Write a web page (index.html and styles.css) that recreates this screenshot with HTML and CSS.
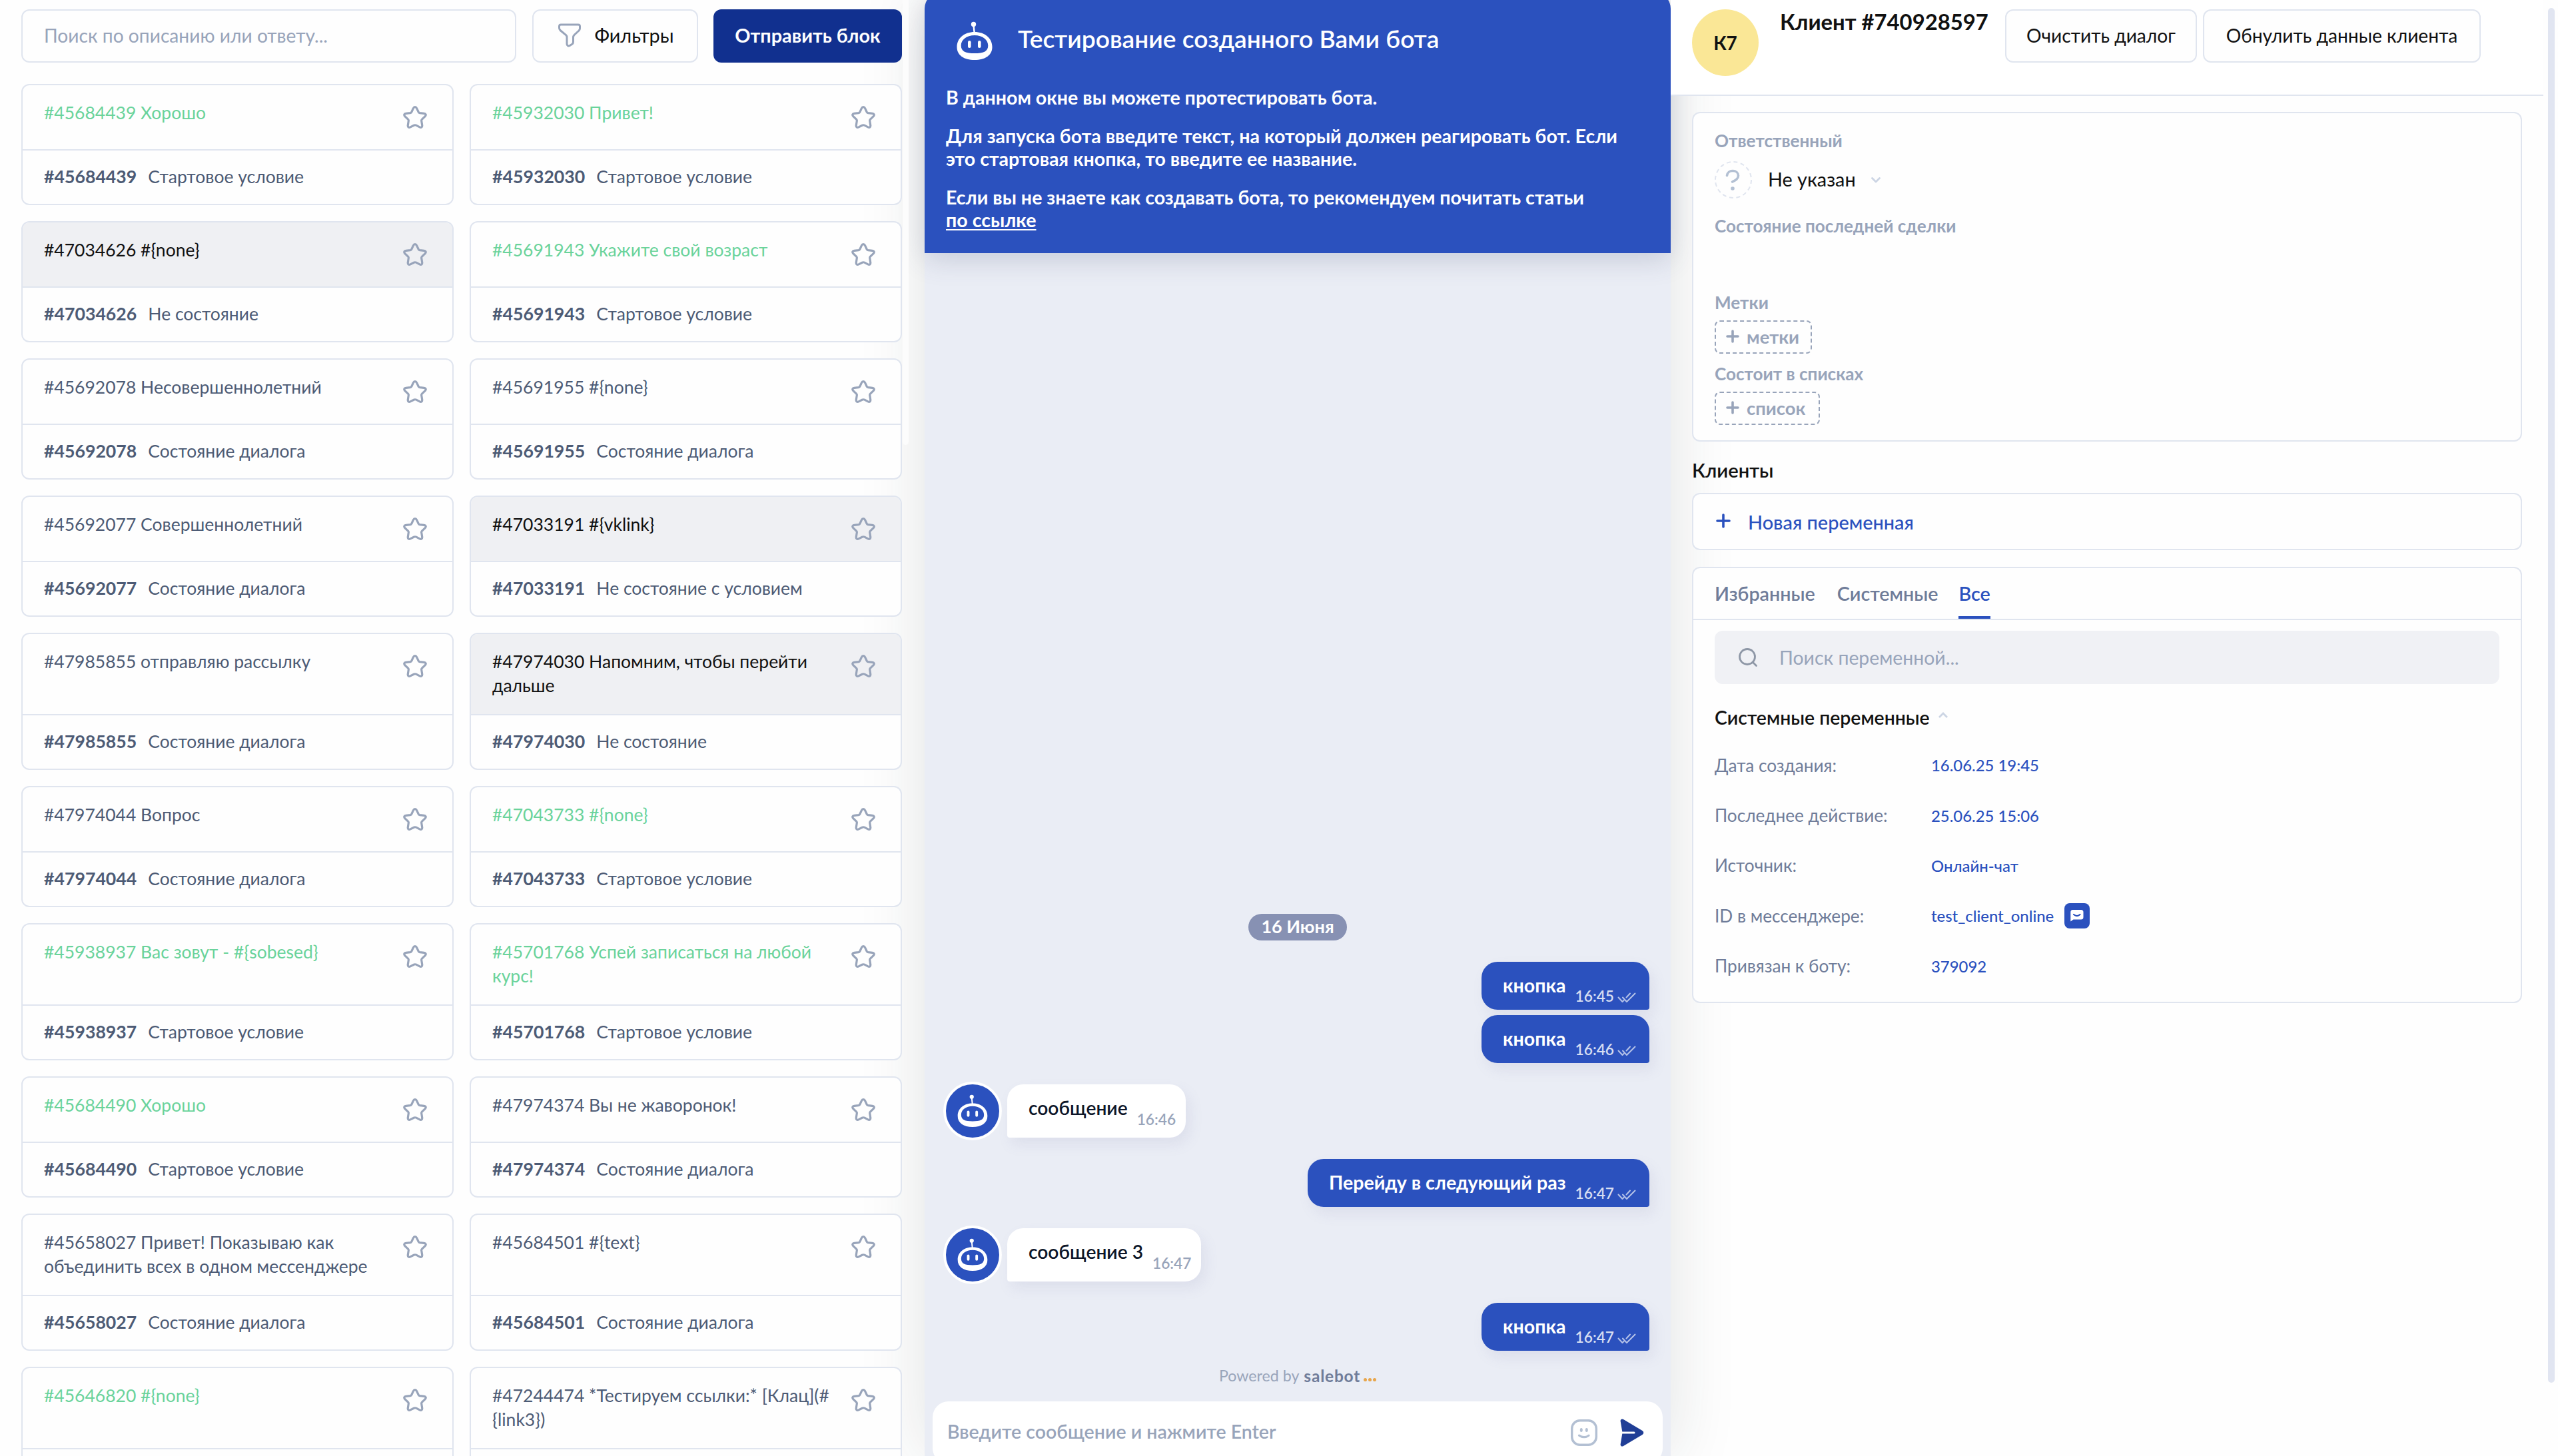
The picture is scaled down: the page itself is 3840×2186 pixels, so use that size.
FILE: index.html
```html
<!DOCTYPE html>
<html lang="ru">
<head>
<meta charset="utf-8">
<title>Тестирование бота</title>
<link rel="stylesheet" href="styles.css">
</head>
<body>
<svg class="sprite" aria-hidden="true">
  <symbol id="star" viewBox="0 0 36 34"><path d="M18 1.6c1.2 0 2 .7 2.6 2l2.5 5.4c.5 1 1 1.4 2.100 1.600l6.300.8c2.800.4 3.600 2.200 1.700 4.200l-4.700 4.500c-.7.700-1 1.400-.8 2.300l1 6.600c.4 2.800-1.300 4-3.700 2.900l-5.200-2.700c-1.200-.6-2.400-.6-3.600 0L11 31.900c-2.400 1.100-4.100-.1-3.700-2.900l1-6.600c.2-.9-.1-1.600-.8-2.300l-4.700-4.500c-1.900-2-1.100-3.800 1.700-4.200l6.300-.8c1.100-.2 1.600-.6 2.100-1.600l2.500-5.400c.6-1.300 1.400-2 2.600-2z" fill="none" stroke="#98a4ba" stroke-width="3.200" stroke-linejoin="round"/></symbol>
  <symbol id="bot" viewBox="0 0 54 58">
    <circle cx="25.500" cy="4.500" r="3.700" fill="#fff"/>
    <path d="M25.500 6l1.400 13" stroke="#fff" stroke-width="2.400"/>
    <path fill="#fff" fill-rule="evenodd" d="M27 17c15 0 26.500 9 26.500 22.500C53.500 52 43 59 27 59S.5 52 .5 39.500C.5 26 12 17 27 17zm0 5c-12 0-20.300 6.500-20.300 15.500S14 49 27 49s20.300-2.500 20.300-11.500S39 22 27 22z" transform="translate(0 -1)"/>
    <rect x="17" y="29" width="4.600" height="11" rx="2.300" fill="#fff"/>
    <rect x="32" y="29" width="4.600" height="11" rx="2.300" fill="#fff"/>
  </symbol>
  <symbol id="checks" viewBox="0 0 28 16"><path d="M1.500 7.500l6 6.500L9.500 12M8 7.500l6 6.500L26.500 1.500M13.500 7.500L19 1.500" fill="none" stroke="#fff" stroke-opacity=".65" stroke-width="2" stroke-linecap="round" stroke-linejoin="round"/></symbol>
</svg>

<div class="app">
  <section class="blocks">
    <div class="toolbar">
      <div class="search">Поиск по описанию или ответу...</div>
      <div class="btn filters"><svg width="34" height="36" viewBox="0 0 34 36"><path d="M4 2h26q2.500 0 2.500 2.500v3c0 1.500-.5 2.500-1.500 3.500l-7 6.500c-1 1-1.500 2-1.500 3.500v7c0 1.500-.5 2.500-1.700 3.300l-3.500 2.200c-2 1.200-4.300 0-4.300-2.500V21c0-1.300-.5-2.500-1.400-3.400L3 10.500C2 9.500 1.500 8.500 1.500 7V4.500Q1.500 2 4 2z" fill="none" stroke="#98a4ba" stroke-width="3" stroke-linejoin="round"/></svg><span>Фильтры</span></div>
      <div class="btn primary">Отправить блок</div>
    </div>
    <div class="cards">
      <article class="card green"><header><p>#45684439 Хорошо</p><svg class="star"><use href="#star"/></svg></header><footer><b>#45684439</b>Стартовое условие</footer></article>
      <article class="card green"><header><p>#45932030 Привет!</p><svg class="star"><use href="#star"/></svg></header><footer><b>#45932030</b>Стартовое условие</footer></article>
      <article class="card grey"><header><p>#47034626 #{none}</p><svg class="star"><use href="#star"/></svg></header><footer><b>#47034626</b>Не состояние</footer></article>
      <article class="card green"><header><p>#45691943 Укажите свой возраст</p><svg class="star"><use href="#star"/></svg></header><footer><b>#45691943</b>Стартовое условие</footer></article>
      <article class="card"><header><p>#45692078 Несовершеннолетний</p><svg class="star"><use href="#star"/></svg></header><footer><b>#45692078</b>Состояние диалога</footer></article>
      <article class="card"><header><p>#45691955 #{none}</p><svg class="star"><use href="#star"/></svg></header><footer><b>#45691955</b>Состояние диалога</footer></article>
      <article class="card"><header><p>#45692077 Совершеннолетний</p><svg class="star"><use href="#star"/></svg></header><footer><b>#45692077</b>Состояние диалога</footer></article>
      <article class="card grey"><header><p>#47033191 #{vklink}</p><svg class="star"><use href="#star"/></svg></header><footer><b>#47033191</b>Не состояние с условием</footer></article>
      <article class="card"><header><p>#47985855 отправляю рассылку</p><svg class="star"><use href="#star"/></svg></header><footer><b>#47985855</b>Состояние диалога</footer></article>
      <article class="card grey"><header><p>#47974030 Напомним, чтобы перейти<br>дальше</p><svg class="star"><use href="#star"/></svg></header><footer><b>#47974030</b>Не состояние</footer></article>
      <article class="card"><header><p>#47974044 Вопрос</p><svg class="star"><use href="#star"/></svg></header><footer><b>#47974044</b>Состояние диалога</footer></article>
      <article class="card green"><header><p>#47043733 #{none}</p><svg class="star"><use href="#star"/></svg></header><footer><b>#47043733</b>Стартовое условие</footer></article>
      <article class="card green"><header><p>#45938937 Вас зовут - #{sobesed}</p><svg class="star"><use href="#star"/></svg></header><footer><b>#45938937</b>Стартовое условие</footer></article>
      <article class="card green"><header><p>#45701768 Успей записаться на любой<br>курс!</p><svg class="star"><use href="#star"/></svg></header><footer><b>#45701768</b>Стартовое условие</footer></article>
      <article class="card green"><header><p>#45684490 Хорошо</p><svg class="star"><use href="#star"/></svg></header><footer><b>#45684490</b>Стартовое условие</footer></article>
      <article class="card"><header><p>#47974374 Вы не жаворонок!</p><svg class="star"><use href="#star"/></svg></header><footer><b>#47974374</b>Состояние диалога</footer></article>
      <article class="card"><header><p>#45658027 Привет! Показываю как<br>объединить всех в одном мессенджере</p><svg class="star"><use href="#star"/></svg></header><footer><b>#45658027</b>Состояние диалога</footer></article>
      <article class="card"><header><p>#45684501 #{text}</p><svg class="star"><use href="#star"/></svg></header><footer><b>#45684501</b>Состояние диалога</footer></article>
      <article class="card green"><header><p>#45646820 #{none}</p><svg class="star"><use href="#star"/></svg></header><footer></footer></article>
      <article class="card"><header><p>#47244474 *Тестируем ссылки:* [Клац](#<br>{link3})</p><svg class="star"><use href="#star"/></svg></header><footer></footer></article>
    </div>
    <div class="thumb"></div>
  </section>

  <section class="chat">
    <header class="chat-head">
      <div class="chat-title"><svg width="54" height="58"><use href="#bot"/></svg><h1>Тестирование созданного Вами бота</h1></div>
      <p>В данном окне вы можете протестировать бота.</p>
      <p>Для запуска бота введите текст, на который должен реагировать бот. Если<br>это стартовая кнопка, то введите ее название.</p>
      <p>Если вы не знаете как создавать бота, то рекомендуем почитать статьи<br><u>по ссылке</u></p>
    </header>
    <div class="log">
      <div class="date">16 Июня</div>
      <div class="msg out"><span>кнопка</span><time>16:45</time><svg class="checks"><use href="#checks"/></svg></div>
      <div class="msg out next"><span>кнопка</span><time>16:46</time><svg class="checks"><use href="#checks"/></svg></div>
      <div class="row"><div class="ava"><svg width="46" height="49" viewBox="0 0 54 58"><use href="#bot"/></svg></div><div class="msg in"><span>сообщение</span><time>16:46</time></div></div>
      <div class="msg out"><span>Перейду в следующий раз</span><time>16:47</time><svg class="checks"><use href="#checks"/></svg></div>
      <div class="row"><div class="ava"><svg width="46" height="49" viewBox="0 0 54 58"><use href="#bot"/></svg></div><div class="msg in"><span>сообщение 3</span><time>16:47</time></div></div>
      <div class="msg out"><span>кнопка</span><time>16:47</time><svg class="checks"><use href="#checks"/></svg></div>
    </div>
    <div class="powered">Powered by <b>salebot</b><i></i><i></i><i></i></div>
    <div class="composer">
      <span>Введите сообщение и нажмите Enter</span>
      <svg width="40" height="40" viewBox="0 0 40 40"><rect x="1.700" y="1.700" width="36.600" height="36.600" rx="12" fill="none" stroke="#b3c0d3" stroke-width="3.400"/><ellipse cx="15.800" cy="16" rx="2" ry="3" fill="#b3c0d3"/><ellipse cx="23.800" cy="16" rx="2" ry="3" fill="#b3c0d3"/><path d="M12.500 24.200q7.500 5 14.500 0" fill="none" stroke="#b3c0d3" stroke-width="3.200" stroke-linecap="round"/></svg>
      <svg class="send" width="36" height="42" viewBox="0 0 36 42"><path d="M.6 3.500C.5.800 2.800-.3 5 1l28.500 17c2.300 1.500 2.300 4.500 0 6L5 41c-2.200 1.300-4.500.2-4.400-2.500L3.300 22.500H21q1.500 0 1.500-1.500T21 19.500H3.300z" fill="#203e96"/></svg>
    </div>
  </section>

  <section class="client">
    <header class="client-head">
      <div class="avatar">К7</div>
      <h2>Клиент #740928597</h2>
      <div class="btn">Очистить диалог</div>
      <div class="btn">Обнулить данные клиента</div>
    </header>
    <div class="panel info">
      <div class="label">Ответственный</div>
      <div class="owner"><svg width="56" height="56" viewBox="0 0 56 56"><circle cx="28" cy="28" r="27" fill="none" stroke="#e0e5ef" stroke-width="2" stroke-dasharray="6 4.600"/><path d="M18.500 21.500c.6-4 4-7 8.500-7 5 0 8.500 3 8.500 7.200 0 5-4.500 7-9 9.300" fill="none" stroke="#b3c0d3" stroke-width="3.600" stroke-linecap="round"/><circle cx="27" cy="41" r="2.800" fill="#b3c0d3"/></svg><span>Не указан</span><svg width="14" height="9" viewBox="0 0 14 9"><path d="M1.500 1.500L7 7l5.500-5.500" fill="none" stroke="#ccd5e4" stroke-width="2.800" stroke-linecap="round" stroke-linejoin="round"/></svg></div>
      <div class="label deal">Состояние последней сделки</div>
      <div class="label">Метки</div>
      <div class="tag"><svg width="20" height="20" viewBox="0 0 20 20"><path d="M10 2v16M2 10h16" stroke="#98a4ba" stroke-width="3.600" stroke-linecap="round"/></svg>метки</div>
      <div class="label lists">Состоит в списках</div>
      <div class="tag wide"><svg width="20" height="20" viewBox="0 0 20 20"><path d="M10 2v16M2 10h16" stroke="#98a4ba" stroke-width="3.600" stroke-linecap="round"/></svg>список</div>
    </div>
    <h3>Клиенты</h3>
    <div class="panel new"><svg width="22" height="22" viewBox="0 0 22 22"><path d="M11 2v18M2 11h18" stroke="#2b51be" stroke-width="3.600" stroke-linecap="round"/></svg><span>Новая переменная</span></div>
    <div class="panel vars">
      <nav><span>Избранные</span><span>Системные</span><span class="on">Все</span></nav>
      <div class="find"><svg width="30" height="30" viewBox="0 0 30 30"><circle cx="14" cy="14" r="11.500" fill="none" stroke="#8e97a6" stroke-width="2.800"/><path d="M22 22l5.500 5.500" stroke="#8e97a6" stroke-width="2.800" stroke-linecap="round"/></svg>Поиск переменной...</div>
      <h4>Системные переменные<svg width="16" height="10" viewBox="0 0 16 10"><path d="M2 8l6-6 6 6" fill="none" stroke="#ccd5e4" stroke-width="2.800"/></svg></h4>
      <dl>
        <dt>Дата создания:</dt><dd>16.06.25 19:45</dd>
        <dt>Последнее действие:</dt><dd>25.06.25 15:06</dd>
        <dt>Источник:</dt><dd>Онлайн-чат</dd>
        <dt>ID в мессенджере:</dt><dd>test_client_online<svg width="38" height="38" viewBox="0 0 38 38"><rect width="38" height="38" rx="8" fill="#2b51be"/><path d="M12.500 10h12.500q3.500 0 3.500 3.500v7.500q0 3.500-3.500 3.500H13.500L9.300 27.500V13.500q0-3.500 3.200-3.500z" fill="#fff"/><path d="M14 17q5 4.200 9.500 0" fill="none" stroke="#2b51be" stroke-width="2.200" stroke-linecap="round"/></svg></dd>
        <dt>Привязан к боту:</dt><dd>379092</dd>
      </dl>
    </div>
    <div class="scroll"></div>
  </section>
</div>
</body>
</html>
```
FILE: styles.css
```css
* { box-sizing: border-box; }
body { margin: 0; font-family: Lato, "Open Sans", sans-serif; color: #4d5b75; background: #fefefe; }
h1, h2, h3, h4, p, dl, dd { margin: 0; }
.sprite { position: absolute; width: 0; height: 0; }
.app { display: flex; width: 3840px; height: 2186px; overflow: hidden; }

/* left: blocks */
.blocks { position: relative; width: 1388px; padding: 14px 34px 0 32px; flex: none; }
.toolbar { display: flex; height: 80px; position: relative; z-index: 2; }
.search { width: 743px; border: 2px solid #e0e5ef; border-radius: 12px; padding: 0 32px; line-height: 74px; font-size: 28.2px; color: #98a4ba; background: #fefefe; }
.btn { border: 2px solid #e0e5ef; border-radius: 12px; height: 80px; display: flex; align-items: center; justify-content: center; font-size: 28.2px; color: #111; background: #fefefe; padding-bottom: 2px; }
.filters { width: 249px; margin-left: 24px; gap: 21px; font-size: 28.8px; padding-left: 2px; }
.primary { width: 283px; margin-left: 23px; border: 0; background: #11308f; color: #fff; font-weight: 700; font-size: 28.8px; }
.cards { display: grid; grid-template-columns: 649px 649px; gap: 24px; margin-top: 32px; position: relative; z-index: 2; }
.card { border: 2px solid #e0e5ef; border-radius: 12px; background: #fefefe; overflow: hidden; font-size: 26.5px; display: flex; flex-direction: column; }
.card header { flex: 1; display: flex; justify-content: space-between; padding: 23px 32px 25px; }
.card p { line-height: 36px; min-height: 48px; white-space: nowrap; }
.card .star { width: 36px; height: 34px; margin: 8px 6px 0 -40px; flex: none; }
.card footer { height: 82px; border-top: 2px solid #e0e5ef; line-height: 78px; padding: 0 32px; white-space: nowrap; }
.card b { font-weight: 700; font-size: 26.7px; margin-right: 17px; }
.green p { color: #6ad39b; }
.grey header { background: #eff0f3; }
.grey p { color: #111; }
.thumb { position: absolute; z-index: 3; left: 1355px; top: 0; width: 9px; height: 668px; background: #fcfcfc; border-radius: 0 0 5px 5px; }

/* center: chat */
.chat { position: relative; width: 1120px; flex: none; display: flex; flex-direction: column; background: #eaedf5; margin-top: -11px; border-radius: 24px 24px 0 0; box-shadow: 0 0 100px rgba(30, 45, 50, .13); }
.chat-head { height: 391px; background: #2b51be; border-radius: 24px 24px 0 0; color: #fff; padding: 44px 32px 0; box-shadow: 0 10px 40px rgba(60, 70, 110, .2); }
.chat-title { display: flex; align-items: center; height: 58px; padding-left: 16px; margin-bottom: 38px; }
.chat-title svg { margin-top: -3px; }
.chat-title h1 { font-size: 37.2px; font-weight: 600; margin: -8px 0 0 38px; line-height: 50px; }
.chat-head p { font-size: 28.6px; font-weight: 700; line-height: 34px; margin-bottom: 24px; white-space: nowrap; }
.chat-head u { text-underline-offset: 3px; text-decoration-thickness: 2px; text-decoration-skip-ink: none; }
.log { flex: 1; display: flex; flex-direction: column; justify-content: flex-end; padding: 0 32px; }
.date { align-self: center; width: 148px; height: 40px; line-height: 38px; border-radius: 20px; background: #8791b3; color: #fff; font-weight: 700; font-size: 27px; text-align: center; }
.msg { display: flex; height: 72px; border-radius: 24px 24px 4px 24px; box-shadow: 6px 10px 20px rgba(120, 120, 170, .12); font-size: 28.6px; font-weight: 700; white-space: nowrap; padding-left: 32px; line-height: 70px; }
.msg time { font-size: 22.7px; font-weight: 600; margin-left: 14px; line-height: 104px; height: 72px; }
.out { align-self: flex-end; background: #2b51be; color: #fff; margin-top: 32px; padding-right: 20px; }
.out time { color: rgba(255, 255, 255, .82); }
.next { margin-top: 8px; }
.checks { width: 28px; height: 16px; margin: 46px 0 0 5px; }
.row { display: flex; height: 80px; margin-top: 32px; gap: 16px; }
.ava { width: 88px; height: 88px; margin: -4px -4px; border: 4px solid #fff; border-radius: 50%; background: #2b51be; display: flex; align-items: center; justify-content: center; padding-bottom: 2px; }
.row .msg { margin-left: -4px; }
.in { height: 80px; background: #fff; color: #0d1629; border-radius: 24px 24px 24px 4px; font-weight: 600; padding-right: 15px; font-size: 28.2px; }
.in time { color: #98a4ba; line-height: 106px; }
.powered { display: flex; align-items: center; margin: 21px 0 23px 442px; height: 32px; font-size: 23.2px; color: #98a4ba; }
.powered b { color: #6f7c99; font-weight: 700; margin: 0 5px 0 7px; font-size: 24.5px; letter-spacing: .8px; }
.powered i { width: 5px; height: 5px; border-radius: 50%; background: #e8a54a; margin: 13px 2px 0 0; }
.composer { display: flex; align-items: center; height: 94px; margin: 0 12px -12px; border-radius: 24px; background: #fff; padding: 0 28px 0 22px; color: #98a4ba; font-size: 28.5px; font-weight: 600; }
.composer span { flex: 1; padding-bottom: 4px; }
.send { margin-left: 34px; }

/* right: client */
.client { position: relative; width: 1332px; }
.client-head { position: relative; height: 144px; width: 1310px; background: #fff; border-bottom: 2px solid #e0e5ef; display: flex; padding: 14px 0 0 32px; }
.avatar { width: 100px; height: 100px; border-radius: 50%; background: #fae796; color: #111; font-size: 28px; font-weight: 700; line-height: 100px; text-align: center; }
.client-head h2 { font-size: 32.8px; font-weight: 700; color: #111; line-height: 38px; margin: 0 0 0 32px; width: 338px; white-space: nowrap; }
.client-head .btn { width: 288px; }
.client-head .btn + .btn { width: 417px; margin-left: 9px; }
.panel { position: relative; margin-left: 32px; width: 1246px; border: 2px solid #e0e5ef; border-radius: 12px; background: #fefefe; }
.info { margin-top: 24px; height: 495px; padding: 23px 32px 0; }
.label { font-size: 26.1px; font-weight: 700; color: #98a4ba; line-height: 36px; }
.owner { display: flex; align-items: center; height: 56px; margin: 13px 0 23px; font-size: 28.8px; color: #111; }
.owner span { margin: -2px 23px 0 24px; }
.deal { height: 115px; }
.tag { display: flex; align-items: center; width: 146px; height: 50px; border: 2px dashed #98a4ba; border-radius: 8px; padding: 0 0 2px 15px; margin-top: 9px; gap: 11px; font-size: 27.4px; font-weight: 700; color: #98a4ba; }
.wide { width: 158px; }
.lists { margin-top: 12px; }
h3 { font-size: 29.2px; font-weight: 600; color: #111; line-height: 40px; margin: 23px 0 14px 32px; }
.new { height: 86px; display: flex; align-items: center; padding: 0 34px 2px; gap: 26px; font-size: 28.9px; font-weight: 500; color: #2b51be; }
.new span { padding-top: 2px; }
.vars { margin-top: 25px; height: 655px; }
nav { display: flex; gap: 33px; height: 78px; border-bottom: 2px solid #e0e5ef; padding: 0 32px; font-size: 28.7px; font-weight: 600; line-height: 77px; color: #6f7c99; }
nav .on { color: #2b51be; border-bottom: 4px solid #2b51be; height: 76px; margin-left: -2px; }
.find { display: flex; align-items: center; margin: 16px 32px 0; height: 80px; background: #f0f1f5; border-radius: 12px; padding: 0 35px; gap: 32px; font-size: 28.4px; color: #98a4ba; }
h4 { font-size: 28.4px; font-weight: 600; color: #111; line-height: 36px; margin: 32px 32px 16px; display: flex; align-items: center; gap: 12px; }
h4 svg { margin-top: -6px; }
dl { display: grid; grid-template-columns: 325px 1fr; grid-auto-rows: 75.4px; margin: 0 32px; align-items: center; }
dt { font-size: 26.2px; color: #6f7c99; }
dd { font-size: 23.9px; color: #2b51be; display: flex; align-items: center; gap: 16px; font-weight: 500; }
.scroll { position: absolute; left: 1317px; top: 12px; width: 10px; height: 2064px; background: #e1e5f1; border-radius: 5px; }
```
